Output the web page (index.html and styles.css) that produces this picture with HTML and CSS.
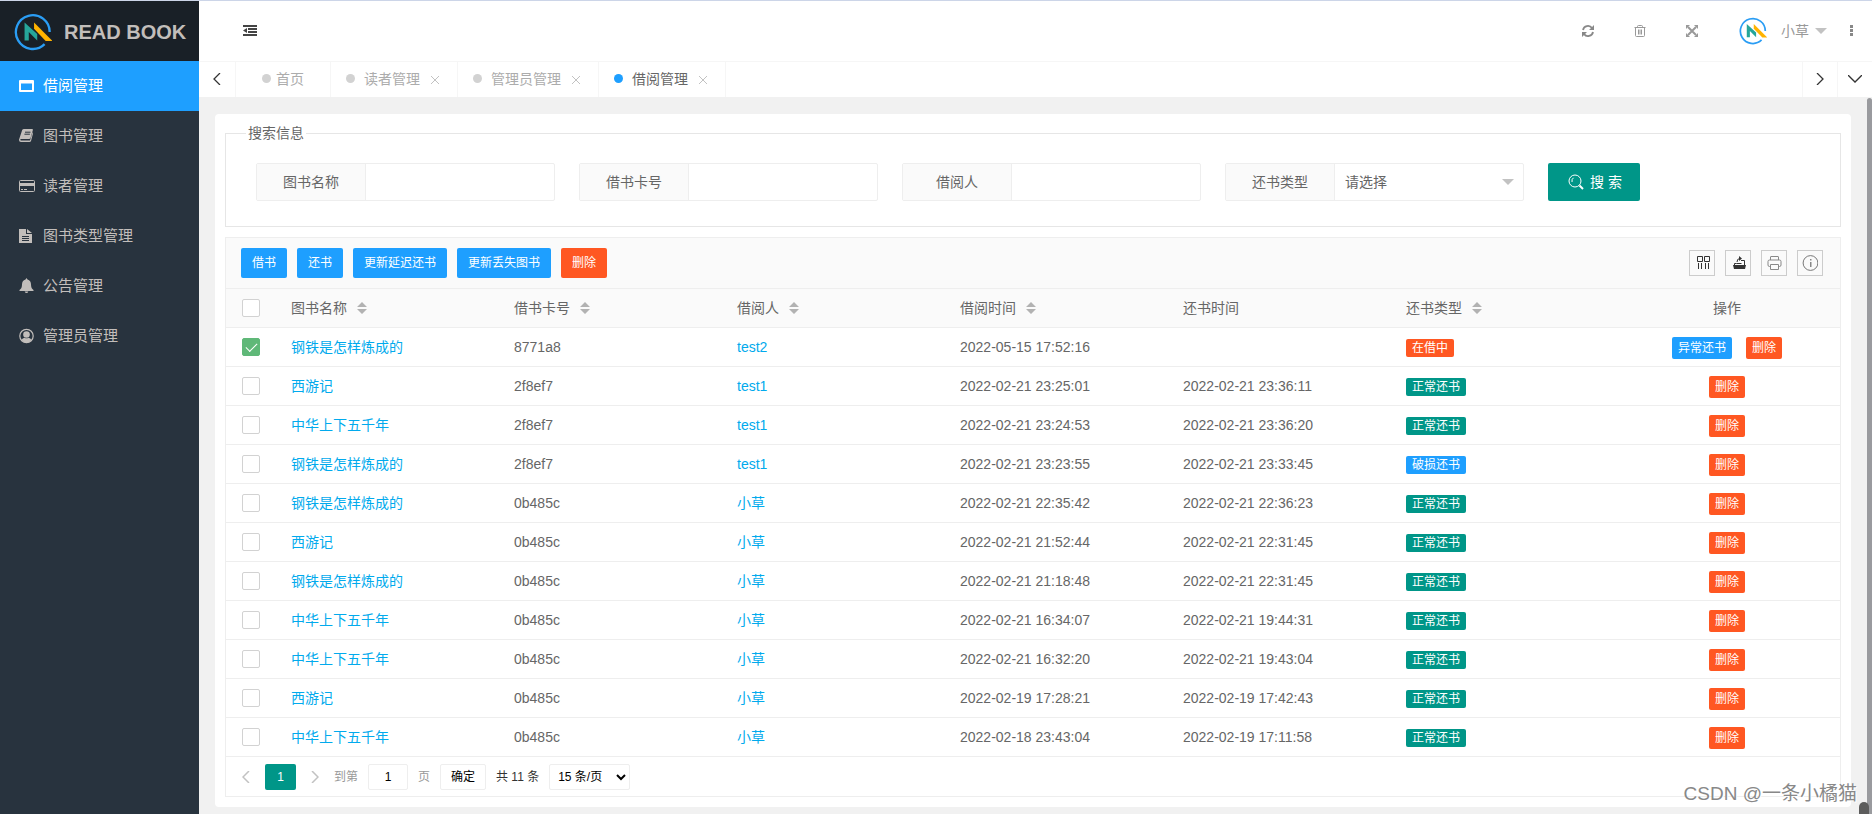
FILE: index.html
```html
<!DOCTYPE html>
<html lang="zh-CN">
<head>
  <meta charset="UTF-8" />
  <title>借阅管理</title>
  <link rel="stylesheet" href="styles.css">
</head>
<body>
  <!-- 公共图标 -->
  <svg class="sprite" aria-hidden="true">
    <symbol id="logo" viewBox="0 0 36 36">
      <path d="M29 29.500A16 16 0 1 1 33.800 18" fill="none" stroke="#2a9df4" stroke-width="2.200" />
      <path d="M10 26V9l12 11v6L14 18v8z" fill="#26a69a" />
      <path d="M19 9l17.500 17.500h-6.500L19 15z" fill="#ffb300" />
    </symbol>
  </svg>

  <!-- 侧边栏 -->
  <aside class="side">
    <a class="brand" href="#">
      <svg width="38" height="38"><use href="#logo" /></svg>
      <span>READ BOOK</span>
    </a>
    <nav class="menu">
      <a class="active" href="#">
        <svg width="16" height="16" viewBox="0 0 16 16"><path fill="currentColor" fill-rule="evenodd" d="M1 2h13q1 0 1 1v10q0 1-1 1H1q-1 0-1-1V3q0-1 1-1zm1 3.500v6.500h11V5.500z" /></svg>
        借阅管理
      </a>
      <a href="#">
        <svg width="16" height="16" viewBox="0 0 16 16"><path fill="currentColor" d="M5 1h8q1.200 0 .9 1L11.500 10q-.3 1-1.500 1H2.200q-1 0-1 .8t1 .8H11l2.600-8.300q.6.500.4 1.200L12 13q-.4 1-1.500 1H2Q0 14 0 12q0-.8.4-1.600L3.200 2Q3.700 1 5 1z" /><path d="M6 4.200h5.500M5.400 6.200h5.500" stroke="#28333e" /></svg>
        图书管理
      </a>
      <a href="#">
        <svg width="16" height="16" viewBox="0 0 16 16"><rect x=".5" y="2.500" width="15" height="11" rx="1" fill="none" stroke="currentColor" /><path fill="currentColor" d="M1 5h14v3H1zM2 11h2v1H2zm3 0h3v1H5z" /></svg>
        读者管理
      </a>
      <a href="#">
        <svg width="16" height="16" viewBox="0 0 16 16"><path fill="currentColor" d="M0 1h7v5h6v9H0zM8 1l5 4H8z" /><path d="M3 8.500h7M3 10.500h7M3 12.500h7" stroke="#28333e" /></svg>
        图书类型管理
      </a>
      <a href="#">
        <svg width="16" height="16" viewBox="0 0 16 16"><path fill="currentColor" d="M7.500 0l1 1.500Q12 2.500 12 6.500q0 4 2.500 5.500v1H.500v-1Q3 10.500 3 6.500q0-4 3.500-5zM5.700 13.500h3.600q-.4 1.500-1.800 1.500t-1.800-1.500z" /></svg>
        公告管理
      </a>
      <a href="#">
        <svg width="16" height="16" viewBox="0 0 16 16"><circle cx="7.500" cy="8" r="6.700" fill="none" stroke="currentColor" stroke-width="1.200" /><circle cx="7.500" cy="6.500" r="3.300" fill="currentColor" /><path fill="currentColor" d="M2.500 12q1-2 3-2.200 2 1 4 0 2 .2 3 2.200-2 2.700-5 2.700T2.500 12z" /></svg>
        管理员管理
      </a>
    </nav>
  </aside>

  <div class="main">
    <!-- 顶栏 -->
    <header class="topbar">
      <button type="button" aria-label="收起菜单">
        <svg width="14" height="12" viewBox="0 0 14 12"><path fill="#444" d="M0 0h14v2H0zM5 3h9v2H5zM5 6h9v2H5zM0 9h14v2H0zM0 5.500L4 3v5z" /></svg>
      </button>
      <div class="actions">
        <button type="button" aria-label="刷新">
          <svg width="14" height="14" viewBox="0 0 14 14"><path d="M2 6a5 5 0 0 1 9-2M12 8a5 5 0 0 1-9 2" fill="none" stroke="#888" stroke-width="1.800" /><path fill="#888" d="M13 1v5H8zM1 13V8h5z" /></svg>
        </button>
        <button type="button" aria-label="清理">
          <svg width="14" height="14" viewBox="0 0 14 14"><path d="M1.500 3.500h11M4.500 3.500v-1q0-1 1-1h3q1 0 1 1v1M2.500 3.500v8q0 1 1 1h7q1 0 1-1v-8M5.500 5.500v5M7 5.500v5M8.500 5.500v5" fill="none" stroke="#999" /></svg>
        </button>
        <button type="button" aria-label="全屏">
          <svg width="14" height="14" viewBox="0 0 14 14"><path d="M3 3l8 8M11 3l-8 8" stroke="#999" stroke-width="2" /><path fill="#999" d="M1 1h4L1 5zM13 1v4L9 1zM1 13V9l4 4zM13 13H9l4-4z" /></svg>
        </button>
      </div>
      <a class="user" href="#">
        <svg width="28" height="28"><use href="#logo" /></svg>
        <span>小草</span>
        <i class="caret"></i>
      </a>
      <button class="more" type="button" aria-label="更多">
        <svg width="3" height="12" viewBox="0 0 3 12"><path fill="#888" d="M0 0h3v3H0zM0 4h3v3H0zM0 8h3v3H0z" /></svg>
      </button>
    </header>

    <!-- 标签页 -->
    <div class="tabs">
      <button class="arrow" type="button" aria-label="向左"><svg width="8" height="12" viewBox="0 0 8 12"><path d="M7 0L1 6l6 6" /></svg></button>
      <a class="tab home" href="#"><i></i>首页</a>
      <a class="tab" href="#"><i></i>读者管理<svg width="8" height="8" viewBox="0 0 8 8"><path d="M0 0l8 8M8 0L0 8" /></svg></a>
      <a class="tab" href="#"><i></i>管理员管理<svg width="8" height="8" viewBox="0 0 8 8"><path d="M0 0l8 8M8 0L0 8" /></svg></a>
      <a class="tab current" href="#"><i></i>借阅管理<svg width="8" height="8" viewBox="0 0 8 8"><path d="M0 0l8 8M8 0L0 8" /></svg></a>
      <span class="space"></span>
      <button class="arrow" type="button" aria-label="向右"><svg width="8" height="12" viewBox="0 0 8 12"><path d="M1 0l6 6-6 6" /></svg></button>
      <button class="arrow" type="button" aria-label="展开"><svg width="14" height="8" viewBox="0 0 14 8"><path d="M0 0l7 7 7-7" /></svg></button>
    </div>

    <main class="content">
      <section class="panel">
        <form>
          <fieldset class="search">
            <legend>搜索信息</legend>
            <div class="field">
              <label for="s-name">图书名称</label>
              <input type="text" id="s-name" />
            </div>
            <div class="field">
              <label for="s-card">借书卡号</label>
              <input type="text" id="s-card" />
            </div>
            <div class="field">
              <label for="s-reader">借阅人</label>
              <input type="text" id="s-reader" />
            </div>
            <div class="field">
              <label for="s-type">还书类型</label>
              <select id="s-type">
                <option>请选择</option>
                <option>正常还书</option>
                <option>延迟还书</option>
                <option>破损还书</option>
                <option>丢失图书</option>
                <option>在借中</option>
              </select>
              <i class="caret"></i>
            </div>
            <button class="search-btn" type="submit">
              <svg width="16" height="16" viewBox="0 0 16 16" fill="none" stroke="#fff"><circle cx="7" cy="7" r="6" /><path d="M5.500 3.800Q3.500 5 4 8" /><path d="M11.500 11.500l3.500 3.500" stroke-width="2" /></svg>
              搜 索
            </button>
          </fieldset>
        </form>

        <div class="grid">
          <div class="toolbar">
            <button class="btn blue" type="button">借书</button>
            <button class="btn blue" type="button">还书</button>
            <button class="btn blue" type="button">更新延迟还书</button>
            <button class="btn blue" type="button">更新丢失图书</button>
            <button class="btn red" type="button">删除</button>
            <div class="tools">
              <button type="button" aria-label="筛选列"><svg width="16" height="16" viewBox="0 0 16 16"><path d="M3.500 1.500h5v5h-5zM10.500 1.500h5v5h-5zM4.500 8v6M7.500 8v6M11.500 8v6M14.500 8v6" fill="none" stroke="#333" /></svg></button>
              <button type="button" aria-label="导出"><svg width="16" height="16" viewBox="0 0 16 16"><path fill="#333" d="M3 10h13l-1 4H4z" /><path d="M4.500 10V8.500h2M11 5.500h3.500V10M6.500 8.500h5M7 7Q7 3.500 10 3.500" fill="none" stroke="#333" /><path fill="#333" d="M9 1l3 2.500L9 6z" /></svg></button>
              <button type="button" aria-label="打印"><svg width="16" height="16" viewBox="0 0 16 16"><path d="M4.500 5V2q0-.5.5-.5h7q.5 0 .5.500v3M4.500 11.500h-1q-1.500 0-1.500-1.500v-3.500Q2 5 3.500 5h10Q15 5 15 6.500V10q0 1.500-1.500 1.500h-1M4.500 9.500h8v5h-8z" fill="none" stroke="#888" /></svg></button>
              <button type="button" aria-label="提示"><svg width="16" height="16" viewBox="0 0 16 16"><circle cx="8.500" cy="8" r="7.400" fill="none" stroke="#777" /><path fill="#888" d="M8 4h1.500v1.500H8zM8 7h1.500v5H8z" /></svg></button>
            </div>
          </div>

          <table>
            <thead>
              <tr>
                <th class="check"><input type="checkbox" aria-label="全选" /></th>
                <th>图书名称<i class="sort"></i></th>
                <th>借书卡号<i class="sort"></i></th>
                <th>借阅人<i class="sort"></i></th>
                <th>借阅时间<i class="sort"></i></th>
                <th>还书时间</th>
                <th>还书类型<i class="sort"></i></th>
                <th class="ops">操作</th>
              </tr>
            </thead>
            <tbody id="rows"></tbody>
          </table>

          <!-- 分页 -->
          <div class="pager">
            <button class="step" type="button" aria-label="上一页"><svg width="8" height="12" viewBox="0 0 8 12"><path d="M7 0L1 6l6 6" /></svg></button>
            <button class="num" type="button">1</button>
            <button class="step" type="button" aria-label="下一页"><svg width="8" height="12" viewBox="0 0 8 12"><path d="M1 0l6 6-6 6" /></svg></button>
            <label for="p-page">到第</label>
            <input type="text" id="p-page" value="1" />
            <span class="muted">页</span>
            <button class="ok" type="button">确定</button>
            <span>共 11 条</span>
            <select aria-label="每页条数">
              <option>15 条/页</option>
              <option>30 条/页</option>
            </select>
          </div>
        </div>
      </section>
    </main>
  </div>
  <div class="scroll"></div>
  <div class="knob"></div>
  <div class="watermark">CSDN @一条小橘猫</div>

  <script>
    const G = "钢铁是怎样炼成的", X = "西游记", Z = "中华上下五千年";
    const OK = ["正常还书", "green"];
    const rows = [
      [G, "8771a8", "test2", "2022-05-15 17:52:16", "", ["在借中", "red"]],
      [X, "2f8ef7", "test1", "2022-02-21 23:25:01", "2022-02-21 23:36:11", OK],
      [Z, "2f8ef7", "test1", "2022-02-21 23:24:53", "2022-02-21 23:36:20", OK],
      [G, "2f8ef7", "test1", "2022-02-21 23:23:55", "2022-02-21 23:33:45", ["破损还书", "blue"]],
      [G, "0b485c", "小草", "2022-02-21 22:35:42", "2022-02-21 22:36:23", OK],
      [X, "0b485c", "小草", "2022-02-21 21:52:44", "2022-02-21 22:31:45", OK],
      [G, "0b485c", "小草", "2022-02-21 21:18:48", "2022-02-21 22:31:45", OK],
      [Z, "0b485c", "小草", "2022-02-21 16:34:07", "2022-02-21 19:44:31", OK],
      [Z, "0b485c", "小草", "2022-02-21 16:32:20", "2022-02-21 19:43:04", OK],
      [X, "0b485c", "小草", "2022-02-19 17:28:21", "2022-02-19 17:42:43", OK],
      [Z, "0b485c", "小草", "2022-02-18 23:43:04", "2022-02-19 17:11:58", OK],
    ];

    document.getElementById("rows").innerHTML = rows
      .map(([book, card, reader, start, end, [type, color]]) => {
        const open = !end; // 未归还
        return `<tr>
          <td class="check"><input type="checkbox" aria-label="选择" ${open ? "checked" : ""} /></td>
          <td><a href="#">${book}</a></td>
          <td>${card}</td>
          <td><a href="#">${reader}</a></td>
          <td>${start}</td>
          <td>${end}</td>
          <td><span class="badge ${color}">${type}</span></td>
          <td class="ops"><div>
            ${open ? '<button class="mini blue" type="button">异常还书</button>' : ""}
            <button class="mini red" type="button">删除</button>
          </div></td>
        </tr>`;
      })
      .join("");
  </script>
</body>
</html>
```

FILE: styles.css
```css
:root {
  --blue: #1e9fff;
  --red: #ff5722;
  --green: #009688;
  --line: #eeeeee;
  --text: #666;
}
* {
  box-sizing: border-box;
  margin: 0;
  padding: 0;
}
body {
  display: flex;
  position: relative;
  min-height: 100vh;
  border-top: 1px solid #ccd5e8;
  background: #f1f1f1;
  color: var(--text);
  font: 14px/24px "Liberation Sans", "Noto Sans CJK SC", sans-serif;
}
a {
  color: inherit;
  text-decoration: none;
}
button,
input,
select {
  font: inherit;
  color: inherit;
}
button {
  border: 0;
  background: none;
  cursor: pointer;
}
svg {
  display: block;
  flex: none;
}
.sprite {
  position: absolute;
  width: 0;
  height: 0;
}
.blue {
  background: var(--blue);
}
.red {
  background: var(--red);
}
.green {
  background: var(--green);
}
.caret {
  border: 6px solid transparent;
  border-top-color: #c2c2c2;
  border-bottom: 0;
}

/* 侧边栏 */
.side {
  flex: none;
  width: 199px;
  background: #28333e;
}
.brand {
  display: flex;
  align-items: center;
  gap: 12px;
  height: 60px;
  padding: 2px 0 0 14px;
  background: #192027;
  color: #c2bebb;
  font-size: 20px;
  font-weight: 700;
}
.menu a {
  display: flex;
  align-items: center;
  gap: 8px;
  height: 50px;
  padding-left: 19px;
  color: #c2bebb;
  font-size: 15px;
}
.menu a.active {
  background: var(--blue);
  color: #fff;
}

/* 顶栏 */
.main {
  flex: 1;
  min-width: 0;
}
.topbar {
  display: flex;
  align-items: center;
  height: 60px;
  padding: 0 19px 0 44px;
  background: #fff;
  color: #999;
}
.actions {
  display: flex;
  gap: 38px;
  margin-left: auto;
}
.user {
  display: flex;
  align-items: center;
  margin-left: 40px;
}
.user span {
  margin: 0 6px 0 14px;
}
.more {
  margin-left: 23px;
}

/* 标签页 */
.tabs {
  display: flex;
  height: 36px;
  border-top: 1px solid #f6f6f6;
  background: #fff;
}
.tab,
.arrow {
  display: flex;
  align-items: center;
  padding-bottom: 2px;
  border-right: 1px solid #f6f6f6;
}
.arrow {
  justify-content: center;
  width: 37px;
}
.space {
  flex: 1;
  border-right: 1px solid #f6f6f6;
}
.space ~ .arrow {
  width: 35px;
}
.space ~ .arrow:last-child {
  width: 34px;
  border-right: 0;
}
.arrow path {
  fill: none;
  stroke: #333;
  stroke-width: 1.3;
}
.tab {
  padding: 0 18px 2px 15px;
  color: #acacac;
}
.tab i {
  width: 9px;
  height: 9px;
  margin-right: 9px;
  border-radius: 50%;
  background: #d2d2d2;
}
.tab svg {
  margin: 3px 0 0 11px;
}
.tab path {
  stroke: #c2c2c2;
}
.tab.home {
  padding: 0 26px 2px;
}
.home i {
  margin-right: 5px;
}
.tab.current {
  color: #666;
}
.current i {
  background: var(--blue);
}

/* 搜索 */
.content {
  padding: 17px 21px 7px 16px;
}
.panel {
  padding: 10px;
  border-radius: 4px;
  background: #fff;
}
.search {
  display: flex;
  flex-wrap: wrap;
  gap: 24px;
  padding: 21px 30px 25px;
  border: 1px solid #e6e6e6;
}
.search legend {
  margin-left: -10px;
  padding: 0 2px;
  line-height: 18px;
}
.field {
  display: flex;
  position: relative;
  width: 299px;
  height: 38px;
  border: 1px solid var(--line);
  border-radius: 2px;
}
.field label {
  width: 109px;
  border-right: 1px solid var(--line);
  background: #fafafa;
  line-height: 36px;
  text-align: center;
}
.field input,
.field select {
  flex: 1;
  min-width: 0;
  padding: 0 10px;
  border: 0;
  background: none;
  appearance: none;
}
.field .caret {
  position: absolute;
  top: 15px;
  right: 9px;
  pointer-events: none;
}
.search-btn {
  display: flex;
  align-items: center;
  gap: 6px;
  height: 38px;
  padding: 0 18px 0 20px;
  border-radius: 2px;
  background: var(--green);
  color: #fff;
}

/* 表格 */
.grid {
  margin-top: 10px;
  border: 1px solid var(--line);
}
.toolbar {
  display: flex;
  align-items: center;
  gap: 10px;
  height: 51px;
  padding: 0 17px 0 15px;
  border-bottom: 1px solid var(--line);
  background: #fafafa;
}
.btn {
  height: 30px;
  padding: 0 11px;
  border-radius: 2px;
  color: #fff;
  font-size: 12px;
}
.tools {
  display: flex;
  gap: 10px;
  margin-left: auto;
}
.tools button {
  display: flex;
  align-items: center;
  justify-content: center;
  width: 26px;
  height: 26px;
  border: 1px solid #ccc;
}
table {
  width: 100%;
  border-spacing: 0;
  table-layout: fixed;
}
th,
td {
  height: 39px;
  padding: 0 15px;
  border-bottom: 1px solid var(--line);
  font-weight: 400;
  text-align: left;
}
thead {
  background: #fafafa;
}
td a {
  color: #01aaed;
}
.check {
  width: 50px;
  padding: 0 16px;
}
.check input {
  display: block;
  position: relative;
  width: 18px;
  height: 18px;
  border: 1px solid #d2d2d2;
  border-radius: 2px;
  background: #fff;
  appearance: none;
}
.check input:checked {
  border-color: #5fb878;
  background: #5fb878;
}
.check input:checked::after {
  content: "";
  position: absolute;
  top: 4px;
  left: 3px;
  width: 10px;
  height: 5px;
  border: solid #fff;
  border-width: 0 0 1px 1px;
  transform: rotate(-45deg);
}
.sort {
  display: inline-block;
  width: 10px;
  height: 12px;
  margin-left: 10px;
  vertical-align: -1px;
  background: #b2b2b2;
  clip-path: polygon(50% 0, 100% 42%, 0 42%, 0 58%, 100% 58%, 50% 100%, 0 58%, 0 42%);
}
.badge {
  display: inline-block;
  height: 18px;
  padding: 0 6px;
  border-radius: 2px;
  color: #fff;
  font-size: 12px;
  line-height: 18px;
  vertical-align: middle;
}
.ops {
  width: 226px;
  text-align: center;
}
.ops div {
  display: flex;
  justify-content: center;
  gap: 14px;
  padding-top: 2px;
}
.mini {
  height: 22px;
  padding: 0 6px;
  border-radius: 2px;
  color: #fff;
  font-size: 12px;
  line-height: 22px;
}

/* 分页 */
.pager {
  display: flex;
  align-items: center;
  gap: 10px;
  height: 39px;
  padding: 0 11px;
  color: #333;
  font-size: 12px;
}
.pager button,
.pager input,
.pager select {
  height: 26px;
  border: 1px solid var(--line);
  border-radius: 2px;
  background: #fff;
  color: #000;
}
.pager .step {
  display: flex;
  align-items: center;
  justify-content: center;
  width: 18px;
  border: 0;
}
.step path {
  fill: none;
  stroke: #c2c2c2;
  stroke-width: 1.5;
}
.pager .num {
  width: 31px;
  border: 0;
  background: var(--green);
  color: #fff;
}
.pager label,
.muted {
  color: #999;
}
.pager input {
  width: 40px;
  text-align: center;
}
.pager .ok {
  width: 46px;
}
.pager select {
  width: 81px;
  padding-left: 4px;
}

/* 浮层 */
.scroll {
  position: absolute;
  top: 97px;
  right: 0;
  bottom: 0;
  width: 5px;
  border-radius: 3px 3px 0 0;
  background: #999a9e;
}
.knob {
  position: absolute;
  right: 3px;
  bottom: 0;
  width: 10px;
  height: 12px;
  border-radius: 5px 5px 0 0;
  background: #5c5c5c;
}
.watermark {
  position: absolute;
  right: 15px;
  bottom: 8px;
  color: #888;
  font-size: 19px;
  text-shadow: 1px 1px 0 #fff;
}
```
